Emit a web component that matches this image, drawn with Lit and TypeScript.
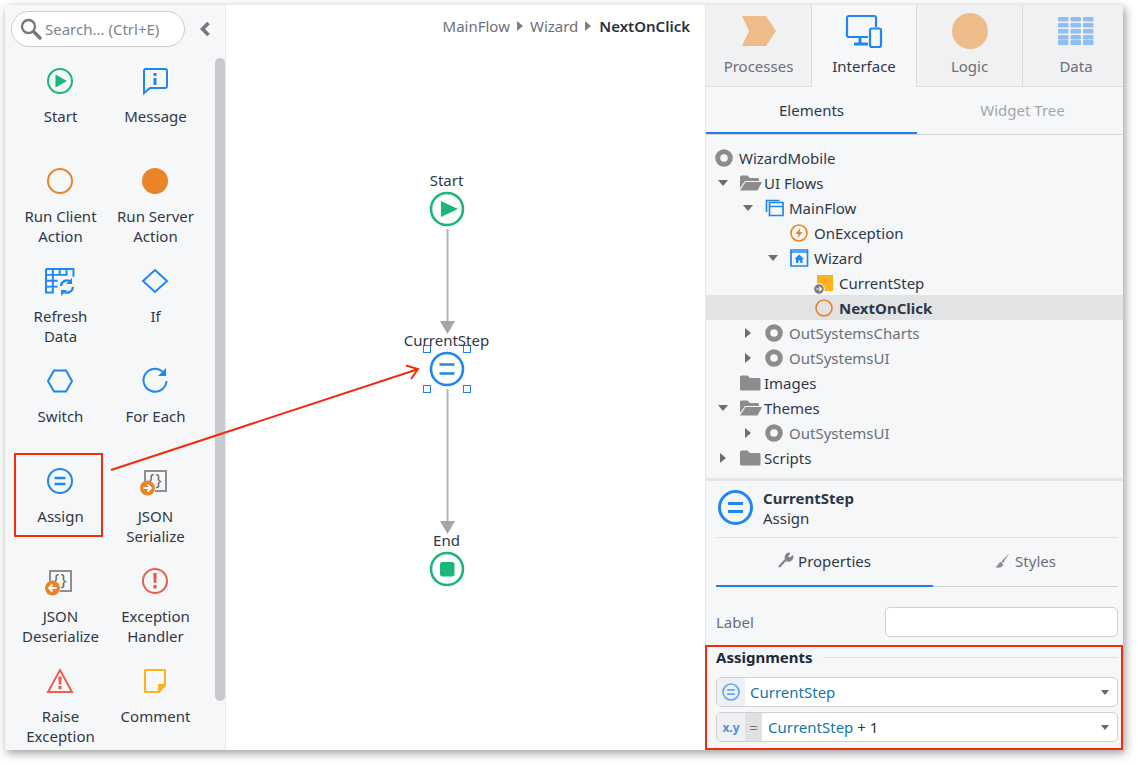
import { LitElement, html, svg, css } from 'lit'
import { customElement } from 'lit/decorators.js'

const BLUE = '#1f87ee'
const GREEN = '#1bb678'
const ORANGE = '#e98427'
const RED = '#ec5f50'
const YELLOW = '#fdb11f'
const GREY = '#8c8c8f'

const ring = (c: string) => svg`<circle cx="13" cy="13" r="12" fill="none" stroke=${c} stroke-width="2"/>`
const assignMarks = svg`<path d="M7.5 10h11M7.5 16h11" stroke=${BLUE} stroke-width="2.4" fill="none"/>`

const jsonIcon = (arrow: string) => svg`
  <path d="M3 13V3h21v20H13" fill="none" stroke="#8f8f8f" stroke-width="2"/>
  <text x="6" y="18" font-size="16" font-family="Noto Sans" fill="#666" letter-spacing="1.5">{}</text>
  <circle cx="5.5" cy="20" r="7.5" fill=${ORANGE}/>
  <path d=${arrow} fill="none" stroke="#fff" stroke-width="1.8"/>`

const ICONS: Record<string, unknown> = {
  start: svg`${ring(GREEN)}<path d="M8.5 6.5 20 13 8.5 19.5Z" fill=${GREEN}/>`,
  message: svg`<path d="M3 1h20a2 2 0 0 1 2 2v15a2 2 0 0 1-2 2H8l-6 5V3a2 2 0 0 1 1-2Z" fill="none" stroke=${BLUE} stroke-width="2"/><path d="M11.5 5h3v3h-3ZM11.5 10h3v7h-3Z" fill=${BLUE}/>`,
  client: ring(ORANGE),
  server: svg`<circle cx="13" cy="13" r="13" fill=${ORANGE}/>`,
  refresh: svg`<path d="M1 1h28v8M13 19H1V1M1 7h22M1 13h12M1 19h12M8 1v24H1v-6M15 1v7M22 1v7" transform="scale(.98)" fill="none" stroke=${BLUE} stroke-width="2"/><path d="M16 18a6 6 0 0 1 10-4M28 19a6 6 0 0 1-10 4" fill="none" stroke=${BLUE} stroke-width="2.2"/><path d="M27 10v6h-6ZM16 28v-6h6Z" fill=${BLUE}/>`,
  if: svg`<path d="M13 2 25 13 13 24 1 13Z" fill="none" stroke=${BLUE} stroke-width="2"/>`,
  switch: svg`<path d="M7 2.5h12L25 13l-6 10.5H7L1 13Z" fill="none" stroke=${BLUE} stroke-width="2"/>`,
  foreach: svg`<path d="M20.5 3.5A11.5 11.5 0 1 0 24.5 13" fill="none" stroke=${BLUE} stroke-width="2"/><path d="M24 0v8h-8Z" fill=${BLUE}/>`,
  assign: svg`${ring(BLUE)}${assignMarks}`,
  jsonser: jsonIcon('M1.5 20h7M5.5 16.5 9 20l-3.500 3.500'),
  jsondes: jsonIcon('M9.500 20h-7M5.500 16.500 2 20l3.500 3.500'),
  handler: svg`${ring(RED)}<path d="M11.2 5h3.6l-.5 10h-2.6ZM11.3 17h3.4v3.5h-3.4Z" fill=${RED}/>`,
  raise: svg`<path d="M13 2 25 24H1Z" fill="none" stroke=${RED} stroke-width="2"/><path d="M11.3 8.5h3.4l-.4 8h-2.6ZM11.4 18h3.2v3.2h-3.2Z" fill=${RED}/>`,
  comment: svg`<path d="M3 2h20v15l-6 7H3Z" fill="none" stroke=${YELLOW} stroke-width="2" stroke-linejoin="round"/><path d="M23 16h-7v8Z" fill=${YELLOW}/>`,
}

const PALETTE = [
  ['start', 'Start'],
  ['message', 'Message'],
  ['client', 'Run Client Action'],
  ['server', 'Run Server Action'],
  ['refresh', 'Refresh Data'],
  ['if', 'If'],
  ['switch', 'Switch'],
  ['foreach', 'For Each'],
  ['assign', 'Assign'],
  ['jsonser', 'JSON Serialize'],
  ['jsondes', 'JSON Deserialize'],
  ['handler', 'Exception Handler'],
  ['raise', 'Raise Exception'],
  ['comment', 'Comment'],
]

const folderClosed = svg`<path d="M0 3a1.5 1.5 0 0 1 1.5-1.5h6L10 4h9a1.5 1.5 0 0 1 1.5 1.5V15a1.5 1.5 0 0 1-1.5 1.5H1.5A1.5 1.5 0 0 1 0 15Z" fill=${GREY}/>`
const folderOpen = svg`<path d="M0 3a1.5 1.5 0 0 1 1.5-1.5h6L10 4h7.5A1.5 1.5 0 0 1 19 5.500V7H5L0 14Z" fill=${GREY}/><path d="M5.500 8H22l-4.500 8.500H0Z" fill=${GREY}/>`
const moduleIcon = svg`<circle cx="9" cy="9" r="6.300" fill="none" stroke=${GREY} stroke-width="5"/>`

const TREE_ICONS: Record<string, unknown> = {
  module: moduleIcon,
  folder: folderClosed,
  open: folderOpen,
  flow: svg`<path d="M1 13V1.500h13M4 3.500h13.500v13H4ZM4 7.500h13.500" transform="translate(.5 0)" fill="none" stroke=${BLUE} stroke-width="1.700"/>`,
  exception: svg`<circle cx="9" cy="9" r="8" fill="none" stroke=${ORANGE} stroke-width="1.600"/><path d="M10.500 3.500 5.500 10h3l-1 4.500 5-6.500h-3Z" fill=${ORANGE}/>`,
  screen: svg`<path d="M1 1h16.500v16H1Z" fill="none" stroke=${BLUE} stroke-width="1.700"/><path d="M1 3h16.500" stroke=${BLUE} stroke-width="1.500"/><path d="M9.250 5.500 14 10h-1.500v4h-2.300v-2.500H8.300V14H6v-4H4.500Z" fill=${BLUE}/>`,
  local: svg`<rect x="2" y="1" width="16" height="16" fill=${YELLOW}/><circle cx="4" cy="15" r="5.300" fill="#7f7f82" stroke="#f6f7f9"/><path d="M1.300 15H6.500M4.300 12.800 6.500 15l-2.200 2.200" fill="none" stroke="#fff" stroke-width="1.200"/>`,
  action: svg`<circle cx="9" cy="9" r="8" fill="none" stroke=${ORANGE} stroke-width="1.600"/>`,
}

interface TreeRow {
  icon: string
  label: string
  depth: number
  caret?: 'open' | 'closed'
  muted?: boolean
  selected?: boolean
}

const TREE: TreeRow[] = [
  { icon: 'module', label: 'WizardMobile', depth: -1 },
  { icon: 'open', label: 'UI Flows', depth: 0, caret: 'open' },
  { icon: 'flow', label: 'MainFlow', depth: 1, caret: 'open' },
  { icon: 'exception', label: 'OnException', depth: 2 },
  { icon: 'screen', label: 'Wizard', depth: 2, caret: 'open' },
  { icon: 'local', label: 'CurrentStep', depth: 3 },
  { icon: 'action', label: 'NextOnClick', depth: 3, selected: true },
  { icon: 'module', label: 'OutSystemsCharts', depth: 1, caret: 'closed', muted: true },
  { icon: 'module', label: 'OutSystemsUI', depth: 1, caret: 'closed', muted: true },
  { icon: 'folder', label: 'Images', depth: 0 },
  { icon: 'open', label: 'Themes', depth: 0, caret: 'open' },
  { icon: 'module', label: 'OutSystemsUI', depth: 1, caret: 'closed', muted: true },
  { icon: 'folder', label: 'Scripts', depth: 0, caret: 'closed' },
]

@customElement('app-root')
export class AppRoot extends LitElement {
  static styles = css`
    :host {
      display: block;
      position: relative;
      width: 1138px;
      height: 765px;
      padding: 5px 15px 15px 5px;
      box-sizing: border-box;
      background: #fff;
      font-family: "Noto Sans", sans-serif;
      font-size: 15px;
      color: #2f3747;
      overflow: hidden;
    }
    svg { display: block; overflow: visible; }
    .window {
      display: flex;
      height: 745px;
      box-shadow: 2px 3px 9px rgba(0, 0, 0, 0.4);
      background: #fff;
    }

    /* left toolbox */
    .side {
      position: relative;
      width: 221px;
      flex: none;
      background: #f6f7f9;
      border-right: 1px solid #e8e8ea;
      box-sizing: border-box;
      overflow: hidden;
    }
    .search-row {
      display: flex;
      align-items: center;
      padding: 6px 0 0 6px;
      height: 36px;
      margin-bottom: 21px;
    }
    .search {
      display: flex;
      align-items: center;
      gap: 3px;
      width: 174px;
      height: 36px;
      box-sizing: border-box;
      padding-left: 8px;
      background: #fff;
      border: 1px solid #cbcbcd;
      border-radius: 18px;
      color: #808389;
      white-space: nowrap;
    }
    .collapse { margin-left: 14px; }
    .palette {
      display: grid;
      grid-template-columns: 95px 95px;
      grid-auto-rows: 100px;
      padding-left: 7px;
      margin-top: 5px;
    }
    .tool {
      position: relative;
      display: flex;
      flex-direction: column;
      align-items: center;
      text-align: center;
      line-height: 20px;
    }
    .tool svg { margin-bottom: 13px; }
    .tool span { width: 84px; margin: -1px 0 0 2px; }
    .tool.marked::after {
      content: "";
      position: absolute;
      left: 2px;
      top: -15px;
      width: 89px;
      height: 84px;
      box-sizing: border-box;
      border: 2px solid #ef2d0c;
    }
    .thumb {
      position: absolute;
      left: 210px;
      top: 53px;
      width: 10px;
      height: 643px;
      border-radius: 5px;
      background: #c9cacd;
    }

    /* flow canvas */
    .canvas {
      position: relative;
      flex: 1;
      background: #fff;
    }
    .crumbs {
      display: flex;
      justify-content: flex-end;
      align-items: center;
      gap: 7px;
      height: 20px;
      margin: 11px 15px 0 0;
      color: #6b7079;
    }
    .crumbs b { color: #2a3140; font-weight: 600; margin-left: 1px; }
    .caret-r {
      width: 0;
      height: 0;
      border-left: 6px solid #7d7f84;
      border-top: 5px solid transparent;
      border-bottom: 5px solid transparent;
    }
    .flow { position: absolute; left: 0; top: 0; }
    .node-label {
      position: absolute;
      transform: translateX(-50%);
      line-height: 20px;
      white-space: nowrap;
    }

    /* right panel */
    .panel {
      width: 418px;
      flex: none;
      display: flex;
      flex-direction: column;
      background: #f6f7f9;
      border-left: 1px solid #e8e8ea;
      box-sizing: border-box;
    }
    .app-tabs {
      display: grid;
      grid-template-columns: 105px 105px 106px 1fr;
      height: 82px;
      flex: none;
    }
    .app-tab {
      display: flex;
      flex-direction: column;
      align-items: center;
      background: #f0f1f3;
      border-bottom: 1px solid #dcdddf;
      border-left: 1px solid #dcdddf;
      color: #6a6f78;
      box-sizing: border-box;
    }
    .app-tab:first-child { border-left: 0; }
    .app-tab:last-child { padding-left: 6px; }
    .app-tab.on {
      background: #f6f7f9;
      border-bottom-color: transparent;
      color: #2f3747;
    }
    .app-tab .ico {
      height: 36px;
      margin: 8px 0 7px;
      display: flex;
      align-items: center;
    }
    .sub-tabs {
      display: flex;
      height: 48px;
      flex: none;
      border-bottom: 1px solid #d4d5d7;
      box-sizing: border-box;
      overflow: hidden;
    }
    .sub-tab {
      flex: 1;
      display: flex;
      align-items: center;
      justify-content: center;
      gap: 5px;
      color: #a3a6ab;
      box-sizing: border-box;
      border-bottom: 2px solid transparent;
    }
    .sub-tabs .sub-tab { flex: none; width: 211px; }
    .sub-tab.on { color: #2f3747; border-bottom-color: #1f7fe8; }
    .tree { padding-top: 10px; height: 343px; box-sizing: border-box; flex: none; }
    .row {
      display: flex;
      align-items: center;
      height: 25px;
    }
    .row.muted { color: #6a6f78; }
    .row.sel { background: #e2e3e5; font-weight: 700; }
    .row .arrow {
      width: 25px;
      flex: none;
      display: flex;
      justify-content: center;
      margin-left: -1px;
    }
    .row .tico {
      width: 29px;
      flex: none;
      box-sizing: border-box;
      padding-left: 5px;
      display: flex;
    }
    .tri-d {
      width: 0;
      height: 0;
      border-top: 6px solid #6e6e70;
      border-left: 5px solid transparent;
      border-right: 5px solid transparent;
    }
    .tri-r {
      width: 0;
      height: 0;
      border-left: 6px solid #6e6e70;
      border-top: 5px solid transparent;
      border-bottom: 5px solid transparent;
    }
    .detail {
      flex: 1;
      border-top: 3px solid #e5e6e8;
      display: flex;
      flex-direction: column;
      min-height: 0;
    }
    .head {
      display: flex;
      align-items: center;
      gap: 10px;
      margin: 0 5px 0 10px;
      padding: 0 0 3px 2px;
      height: 57px;
      box-sizing: border-box;
      border-bottom: 1px solid #dfe0e2;
      line-height: 20px;
      flex: none;
    }
    .head b { display: block; font-weight: 700; }
    .prop-tabs {
      display: flex;
      height: 49px;
      flex: none;
      margin: 0 5px 0 10px;
      border-bottom: 1px solid #d0d1d3;
      box-sizing: border-box;
    }
    .prop-tabs .sub-tab { color: #6a6f78; margin-bottom: -1px; padding-bottom: 2px; }
    .prop-tabs .sub-tab.on { color: #2f3747; flex: none; width: 217px; }
    .label-row {
      display: flex;
      justify-content: space-between;
      align-items: center;
      margin: 20px 5px 8px 10px;
      height: 30px;
      color: #6a6f78;
      flex: none;
    }
    .input {
      width: 233px;
      height: 30px;
      box-sizing: border-box;
      background: #fff;
      border: 1px solid #cfd0d2;
      border-radius: 5px;
    }
    .assignments {
      flex: 1;
      margin-left: -1px;
      border: 2px solid #ef2d0c;
      padding: 0 3px 0 9px;
      box-sizing: border-box;
      display: flex;
      flex-direction: column;
      gap: 5px;
    }
    .assign-title {
      display: flex;
      align-items: center;
      gap: 10px;
      height: 20px;
      margin-bottom: 5px;
      font-weight: 700;
      color: #22293a;
    }
    .assign-title i { flex: 1; height: 1px; background: #dfe0e2; }
    .select {
      display: flex;
      align-items: stretch;
      height: 30px;
      flex: none;
      box-sizing: border-box;
      background: #fff;
      border: 1px solid #cfd0d2;
      border-radius: 5px;
      overflow: hidden;
    }
    .prefix {
      width: 28px;
      flex: none;
      display: flex;
      align-items: center;
      justify-content: center;
      background: #eff0f3;
      color: #4a90e2;
      font-size: 12px;
      font-weight: 700;
    }
    .eq {
      width: 17px;
      flex: none;
      margin-right: 1px;
      display: flex;
      align-items: center;
      justify-content: center;
      background: #e0e1e3;
      color: #777;
      font-size: 15px;
    }
    .value {
      flex: 1;
      display: flex;
      align-items: center;
      padding-left: 5px;
      color: #2f3747;
      white-space: pre;
    }
    .value em { font-style: normal; color: #0f78ad; }
    .drop {
      align-self: center;
      margin-right: 8px;
      width: 0;
      height: 0;
      border-top: 5px solid #66686c;
      border-left: 4.5px solid transparent;
      border-right: 4.5px solid transparent;
    }
    .callout { position: absolute; left: 0; top: 0; pointer-events: none; }
  `

  private renderTool([icon, label]: string[]) {
    const size = icon === 'refresh' ? 30 : 26
    return html`
      <div class="tool ${icon === 'assign' ? 'marked' : ''}">
        <svg width=${size} height="26" viewBox="0 0 ${size} 26">${ICONS[icon]}</svg>
        <span>${label}</span>
      </div>
    `
  }

  private renderRow(row: TreeRow) {
    const indent = row.depth < 0 ? 4 : 5 + row.depth * 25
    return html`
      <div class="row ${row.muted ? 'muted' : ''} ${row.selected ? 'sel' : ''}" style="padding-left:${indent}px">
        ${row.depth >= 0
          ? html`<span class="arrow">
              ${row.caret === 'open' ? html`<span class="tri-d"></span>` : ''}
              ${row.caret === 'closed' ? html`<span class="tri-r"></span>` : ''}
            </span>`
          : ''}
        <span class="tico"><svg width="23" height="18" viewBox="0 0 23 18">${TREE_ICONS[row.icon]}</svg></span>
        <span>${row.label}</span>
      </div>
    `
  }

  private renderFlow() {
    return html`
      <svg class="flow" width="478" height="745" viewBox="226 5 478 745">
        <circle cx="447" cy="209" r="16" fill="none" stroke=${GREEN} stroke-width="2.600"/>
        <path d="M441 201 458 209 441 217Z" fill=${GREEN}/>
        <path d="M447.500 229v92" stroke="#b5b5b7" stroke-width="2"/>
        <path d="M440 321h15l-7.500 13Z" fill="#a6a6a9"/>
        <circle cx="447" cy="369" r="16" fill="none" stroke=${BLUE} stroke-width="2.600"/>
        <path d="M439.500 364.500h15M439.500 373.500h15" stroke=${BLUE} stroke-width="2.600"/>
        ${[[427, 349], [467, 349], [427, 389], [467, 389]].map(
          ([x, y]) => svg`<rect x=${x - 3.5} y=${y - 3.5} width="7" height="7" fill="#fff" stroke="#1f7fe8" stroke-width="1"/>`,
        )}
        <path d="M447.500 389v132" stroke="#b5b5b7" stroke-width="2"/>
        <path d="M440 521h15l-7.500 13Z" fill="#a6a6a9"/>
        <circle cx="447" cy="569" r="16" fill="none" stroke=${GREEN} stroke-width="2.600"/>
        <rect x="440" y="562" width="14.500" height="14.500" rx="2.500" fill=${GREEN}/>
      </svg>
      ${[['Start', 165], ['CurrentStep', 325], ['End', 525]].map(
        ([text, y]) => html`<span class="node-label" style="left:220.5px;top:${y}px">${text}</span>`,
      )}
    `
  }

  render() {
    return html`
      <div class="window">
        <aside class="side">
          <div class="search-row">
            <div class="search">
              <svg width="22" height="22" viewBox="0 0 22 22">
                <circle cx="8.500" cy="8.500" r="6.500" fill="none" stroke="#77777a" stroke-width="2.400"/>
                <path d="M13.500 13.500 20 20" stroke="#77777a" stroke-width="3.400" stroke-linecap="round"/>
              </svg>
              <span>Search... (Ctrl+E)</span>
            </div>
            <svg class="collapse" width="12" height="16" viewBox="0 0 12 16">
              <path d="M9.500 2 3.500 8l6 6" fill="none" stroke="#77787c" stroke-width="3.600"/>
            </svg>
          </div>
          <div class="palette">${PALETTE.map((t) => this.renderTool(t))}</div>
          <div class="thumb"></div>
        </aside>

        <main class="canvas">
          <div class="crumbs">
            <span>MainFlow</span><i class="caret-r"></i><span>Wizard</span><i class="caret-r"></i><b>NextOnClick</b>
          </div>
          ${this.renderFlow()}
        </main>

        <section class="panel">
          <div class="app-tabs">
            <div class="app-tab">
              <span class="ico"><svg width="34" height="30" viewBox="0 0 34 30"><path d="M0 0h24l10 15-10 15H0l7-15Z" fill="#eebb8a"/></svg></span>
              Processes
            </div>
            <div class="app-tab on">
              <span class="ico"><svg width="36" height="33" viewBox="0 0 36 33">
                <path d="M22 22H3a2 2 0 0 1-2-2V3a2 2 0 0 1 2-2h25a2 2 0 0 1 2 2v9" fill="none" stroke=${BLUE} stroke-width="2.200"/>
                <path d="M14 22v6M8 29h14" stroke=${BLUE} stroke-width="3"/>
                <rect x="24" y="13.500" width="11" height="18.500" rx="2" fill="none" stroke=${BLUE} stroke-width="2.200"/>
              </svg></span>
              Interface
            </div>
            <div class="app-tab">
              <span class="ico"><svg width="36" height="36" viewBox="0 0 36 36"><circle cx="18" cy="18" r="18" fill="#eebb8a"/></svg></span>
              Logic
            </div>
            <div class="app-tab">
              <span class="ico"><svg width="36" height="28" viewBox="0 0 36 28">
                ${[0, 12.500, 25].map((x) =>
                  [0, 6, 12, 18, 23].map(
                    (y) => svg`<rect x=${x} y=${y} width="10.500" height=${y === 23 ? 5 : 4.600} rx="1" fill="#8fbdf5"/>`,
                  ),
                )}
              </svg></span>
              Data
            </div>
          </div>

          <div class="sub-tabs">
            <div class="sub-tab on">Elements</div>
            <div class="sub-tab">Widget Tree</div>
          </div>

          <div class="tree">${TREE.map((r) => this.renderRow(r))}</div>

          <div class="detail">
            <div class="head">
              <svg width="35" height="35" viewBox="0 0 35 35">
                <circle cx="17.500" cy="17.500" r="16" fill="none" stroke=${BLUE} stroke-width="3"/>
                <path d="M10 13.500h15M10 21.500h15" stroke=${BLUE} stroke-width="3"/>
              </svg>
              <div><b>CurrentStep</b>Assign</div>
            </div>
            <div class="prop-tabs">
              <div class="sub-tab on">
                <svg width="15" height="15" viewBox="0 0 15 15">
                  <path d="M1 14 7.500 7M14.500 3.500a4 4 0 0 1-6 3.500A4 4 0 0 1 11 .5L9 3l1 2 2 .5Z" fill="#838488" stroke="#838488" stroke-width="2.200" stroke-linejoin="round"/>
                </svg>
                Properties
              </div>
              <div class="sub-tab">
                <svg width="15" height="15" viewBox="0 0 15 15">
                  <path d="M14.500 0 6.500 8.500l1.500 1.500Z" fill="#8b8c90"/><path d="M6 9c-3 0-2 4-6 5 3 1.500 8 1 8-3Z" fill="#8b8c90"/>
                </svg>
                Styles
              </div>
            </div>
            <div class="label-row"><span>Label</span><div class="input"></div></div>
            <div class="assignments">
              <div class="assign-title"><span>Assignments</span><i></i></div>
              <div class="select">
                <span class="prefix"><svg width="18" height="18" viewBox="0 0 26 26"><circle cx="13" cy="13" r="11.500" fill="none" stroke="#5fa6f2" stroke-width="2.400"/><path d="M7.500 10h11M7.500 16h11" stroke="#5fa6f2" stroke-width="2.600"/></svg></span>
                <span class="value"><em>CurrentStep</em></span>
                <i class="drop"></i>
              </div>
              <div class="select">
                <span class="prefix">x.y</span>
                <span class="eq">=</span>
                <span class="value"><em>CurrentStep</em> + 1</span>
                <i class="drop"></i>
              </div>
            </div>
          </div>
        </section>
      </div>

      <svg class="callout" width="1138" height="765" viewBox="0 0 1138 765">
        <path d="M111 470 417 369.500" stroke="#ef2d0c" stroke-width="2" fill="none"/>
        <path d="M406 365.500 418 369 411 379" stroke="#ef2d0c" stroke-width="2" fill="none"/>
      </svg>
    `
  }
}
